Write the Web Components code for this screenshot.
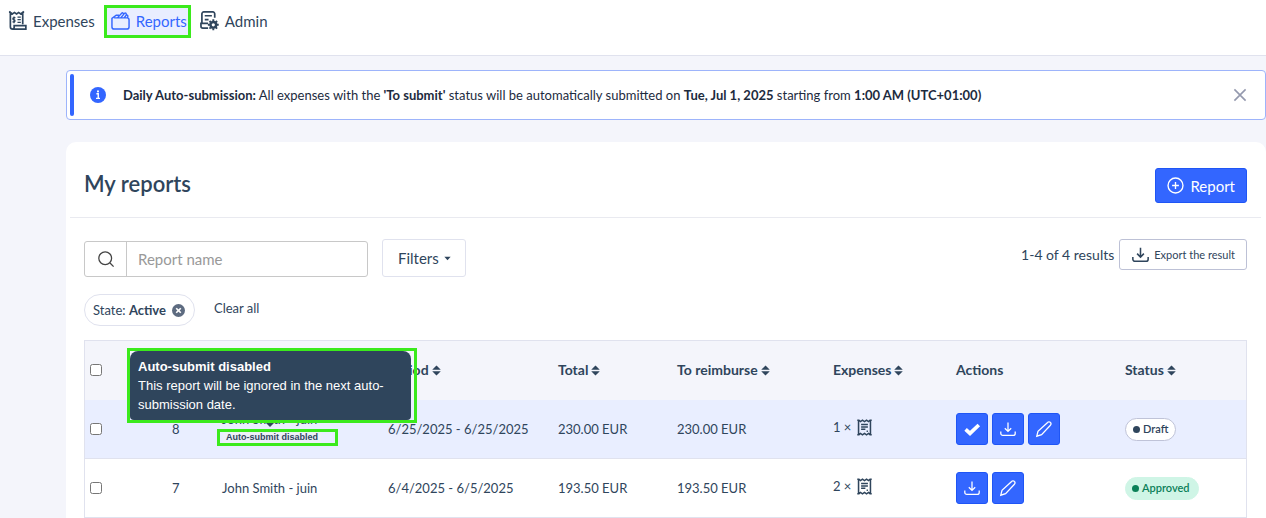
<!DOCTYPE html>
<html lang="en">
<head>
<meta charset="utf-8">
<title>My reports</title>
<style>
  :root {
    --navy: #2f455c;
    --ink: #1d2b3e;
    --blue: #3366ff;
    --page: #f4f5fb;
    --line: #e0e2ee;
    --mark: #3bea1c;
  }
  body { margin: 0; background: var(--page); color: var(--navy); font: 13px/20px Lato, "Liberation Sans", sans-serif; }
</style>
</head>
<body>
<expense-app></expense-app>
<script>
const ICONS = {
  receipt: '<path d="M2.500 16.500V1.500L4.700 3l2.100-1.500L9 3l2.200-1.500L13.300 3l2.200-1.500V14M1 1.200h2M15 1.200h2M2.500 16.500A2.500 2.500 0 0 0 5 19h13.800v-3.500H6.500V17a2 2 0 0 1-2 2"/><path d="M7.800 7H6.200c-1.500 0-1.500 2.200 0 2.200s1.600 2.300 0 2.300H4.700M6.300 5.800v7M10 6.500h3.500M10 9.200h3.500M10 12h3.500" stroke-width="1.300"/>',
  folder: '<path d="M3.300 7.200H16.800A2.200 2.200 0 0 1 19 9.400V16.800A2.200 2.200 0 0 1 16.800 19H3.200A2.200 2.200 0 0 1 1 16.800V7.800L5.500 4.500H8.500M7 7 11.200 2.300Q12 1.600 12.800 2.300L13.300 3.500 10.500 7M13.300 3.500Q14.600 1.300 15.800 2.500L16.300 4 14 7M16.300 4.200Q18.300 4 17.500 7.200"/>',
  admin: '<path d="M15.500 7V3a2 2 0 0 0-2-2H4a2 2 0 0 0-2 2v10M5 5h7.500M5 9h4M8.500 13H1v3a2 2 0 0 0 2 2h5.500"/><circle cx="14" cy="14.500" r="3" stroke-width="2.600"/><path d="M14 8.800v2M14 18.200v2M8.300 14.500h2M17.700 14.500h2M10 10.500l1.300 1.300M16.700 17.200l1.300 1.300M10 18.500l1.300-1.300M16.700 11.800l1.300-1.300" stroke-width="2"/>',
  info: '<circle cx="10" cy="10" r="10" fill="currentColor" stroke="none"/><path d="M8 8.500h2.300V14M7.500 14.200h5" stroke="#fff" stroke-width="1.800"/><circle cx="10" cy="5.500" r="1.300" fill="#fff" stroke="none"/>',
  close: '<path d="m3 3 14 14M17 3 3 17"/>',
  plus: '<circle cx="10" cy="10" r="8.800"/><path d="M10 6v8M6 10h8"/>',
  search: '<circle cx="9" cy="9" r="8"/><path d="m15 15 4.500 4.500"/>',
  download: '<path d="M10 2v11M6 9l4 4 4-4M1 13v2.500a2.500 2.500 0 0 0 2.500 2.500h13a2.500 2.500 0 0 0 2.500-2.500V13"/>',
  pencil: '<path d="m1 19 1.500-6L14.500 1.800a2.300 2.300 0 0 1 3.500 0 2.300 2.300 0 0 1 0 3.500L7 17z"/>',
  check: '<path d="m2 10.500 5.500 5L18.500 5" stroke-width="4.600"/>',
  remove: '<circle cx="10" cy="10" r="10" fill="currentColor" stroke="none"/><path d="m6.500 6.500 7 7M13.500 6.500l-7 7" stroke="#fff" stroke-width="2.600"/>',
  sort: '<path d="M10-1 19.500 8.500H.5zM10 21l9.500-9.500H.5z" fill="currentColor" stroke="none"/>',
  caret: '<path d="M1 5h18l-9 10z" fill="currentColor" stroke="none"/>',
  ticket: '<path d="M3 1v18M17 1v18M1.500 1.500h2L5.300 3l2.300-1.600L10 3l2.400-1.600L14.700 3l1.800-1.500h2M1.500 18.500h2L5.300 17l2.300 1.600L10 17l2.400 1.600 2.300-1.600 1.800 1.500h2M6 6.500h8M6 9.300h8M6 12h5M12.500 14.300H14" stroke-width="1.800"/>'
};

const define = (name, html, setup) => {
  const template = document.createElement('template');
  template.innerHTML = html;
  customElements.define(name, class extends HTMLElement {
    connectedCallback() {
      if (this.shadowRoot) return;
      this.attachShadow({ mode: 'open' }).append(template.content.cloneNode(true));
      if (setup) setup(this, this.shadowRoot);
    }
  });
};

define('ui-icon', `
  <style>
    :host { display: inline-block; flex: none; width: var(--size, 20px); height: var(--size, 20px); }
    svg { display: block; width: 100%; height: 100%; fill: none; stroke: currentColor; stroke-width: var(--stroke, 1.6); overflow: visible; }
  </style>
  <svg viewBox="0 0 20 20" aria-hidden="true"></svg>`,
  (host, root) => { root.querySelector('svg').innerHTML = ICONS[host.getAttribute('name')]; });

define('nav-item', `
  <style>
    :host { display: block; }
    a { display: flex; align-items: center; gap: 6px; box-sizing: border-box; height: 33px; padding: 0 3px 2px; border: 3px solid transparent; color: inherit; text-decoration: none; font-size: 15px; white-space: nowrap; }
    :host([active]) a { background: #e9eeff; border-color: var(--mark); color: var(--blue); padding: 0 1px 2px 4px; }
  </style>
  <a href="#"><slot name="icon"></slot><slot></slot></a>`);

define('app-header', `
  <style>
    :host { display: block; background: #fff; border-bottom: 1px solid var(--line); }
    nav { display: flex; gap: 3px; padding: 5px 2px 17px; }
    .folder { --size: 19px; --stroke: 1.5; }
    .nav { --size: 19px; --stroke: 1.8; }
  </style>
  <nav aria-label="Main">
    <nav-item><ui-icon slot="icon" class="nav" name="receipt"></ui-icon>Expenses</nav-item>
    <nav-item active><ui-icon slot="icon" class="folder" name="folder"></ui-icon>Reports</nav-item>
    <nav-item><ui-icon slot="icon" class="nav" name="admin"></ui-icon>Admin</nav-item>
  </nav>`);

define('info-banner', `
  <style>
    :host { display: flex; align-items: center; box-sizing: border-box; min-height: 50px; padding: 3px; background: #fff; border: 1px solid #9db4fb; border-radius: 4px; color: var(--ink); font-size: 13px; }
    .bar { align-self: stretch; width: 4px; border-radius: 2px; background: var(--blue); margin-right: 16px; }
    ui-icon { --size: 16px; color: var(--blue); }
    p { flex: 1; margin: 0 0 0 17px; }
    button { display: flex; padding: 0; margin-right: 14px; border: 0; background: none; }
    button ui-icon { --stroke: 2; color: #9499ae; }
  </style>
  <span class="bar"></span><ui-icon name="info"></ui-icon>
  <p><slot></slot></p>
  <button aria-label="Dismiss"><ui-icon name="close"></ui-icon></button>`);

define('ui-button', `
  <style>
    :host { display: block; }
    button { display: flex; align-items: center; justify-content: center; gap: 6px; box-sizing: border-box; height: 35px; padding: 0 11px; border: 1px solid #1f55f5; border-radius: 3px; background: var(--blue); color: #fff; font: inherit; font-size: 15px; white-space: nowrap; }
    :host([kind=filter]) button { height: 38px; padding: 0 14px 0 15px; gap: 5px; background: #fff; border-color: var(--line); color: var(--navy); }
    :host([kind=export]) button { height: 31px; gap: 5px; padding: 0 11px 0 12px; background: #fff; border-color: #bdc1d6; color: var(--navy); font-size: 11px; }
    :host([kind=action]) button { width: 32px; height: 32px; padding: 0; }
    :host([kind=plain]) button { height: 20px; padding: 0; border: 0; background: none; color: inherit; font-size: 13px; }
  </style>
  <button><slot></slot></button>`,
  (host, root) => {
    const label = host.getAttribute('label');
    if (label) root.querySelector('button').setAttribute('aria-label', label);
  });

define('search-box', `
  <style>
    :host { display: flex; box-sizing: border-box; width: 284px; height: 36px; border: 1px solid #c8c8c8; border-radius: 3px; background: #fff; }
    label { display: flex; align-items: center; justify-content: center; width: 41px; border-right: 1px solid #c8c8c8; color: #444; }
    ui-icon { --size: 16px; --stroke: 1.6; }
    input { flex: 1; min-width: 0; padding: 0 11px; border: 0; background: none; font: inherit; font-size: 15px; color: var(--navy); }
    input::placeholder { color: #999; }
  </style>
  <label for="q" aria-label="Report name"><ui-icon name="search"></ui-icon></label>
  <input id="q" type="text" placeholder="Report name">`);

define('filter-chip', `
  <style>
    :host { display: flex; align-items: center; box-sizing: border-box; height: 32px; padding: 0 9px 0 8px; gap: 6px; border: 1px solid var(--line); border-radius: 16px; }
    button { display: flex; padding: 0; border: 0; background: none; color: #5d6b80; }
    ui-icon { --size: 13px; }
  </style>
  <span><slot></slot></span><button aria-label="Remove filter"><ui-icon name="remove"></ui-icon></button>`);

define('status-pill', `
  <style>
    :host { display: inline-flex; align-items: center; gap: 3px; box-sizing: border-box; height: 23px; padding: 0 7px; border: 1px solid #bfc3d8; border-radius: 12px; background: #fff; color: var(--navy); font-size: 11px; font-weight: 600; vertical-align: middle; }
    :host::before { content: ""; width: 7px; height: 7px; border-radius: 50%; background: currentColor; }
    :host([state=approved]) { background: #cff5e6; border-color: #cff5e6; color: #0b8058; padding: 0 8px 0 6px; }
  </style>
  <slot></slot>`);

define('auto-submit-name', `
  <style>
    :host { display: block; position: relative; }
    .name { display: block; height: 17px; line-height: 15px; }
    .mark { display: block; box-sizing: border-box; width: 121px; height: 17px; margin: 0 0 0 -5px; border: 3px solid var(--mark); padding-left: 3px; }
    .badge { display: block; width: max-content; padding: 0 3px; background: #edf0f9; font: bold 9px/11px "Liberation Sans", Arial, sans-serif; }
    .tip { position: absolute; z-index: 1; left: -95px; bottom: 23px; box-sizing: border-box; width: 290px; padding-right: 3px; border: 3px solid var(--mark); font: 13px/19px "Liberation Sans", Arial, sans-serif; color: #fff; white-space: normal; }
    .tip div { padding: 6px 8px; border-radius: 8px 8px 4px 4px; background: var(--navy); }
    .tip::after { content: ""; position: absolute; left: 136px; top: 100%; margin-top: 3px; border: 4px solid transparent; border-top-color: var(--navy); border-bottom: 0; }
  </style>
  <span class="name"><slot></slot></span>
  <span class="mark"><span class="badge">Auto-submit disabled</span></span>
  <div class="tip" role="tooltip"><div><b>Auto-submit disabled</b><br>This report will be ignored in the next auto-submission date.</div></div>`);

define('reports-table', `
  <style>
    :host { display: block; }
    table { width: 100%; table-layout: fixed; border-collapse: separate; border-spacing: 0; border: 1px solid var(--line); border-bottom: 0; box-sizing: border-box; }
    th, td { box-sizing: border-box; padding: 0 8px; text-align: left; white-space: nowrap; border-bottom: 1px solid var(--line); height: 59px; }
    th { background: var(--page); border-bottom-color: var(--page); font-weight: 700; font-size: 14px; }
    th ui-icon { --size: 9px; margin-left: 3px; }
    .hot td { background: #e9eeff; }
    th:first-child, td:first-child { padding-left: 5px; }
    input { display: block; width: 12px; height: 12px; margin: 0; }
    .count { display: flex; align-items: center; gap: 5px; padding-bottom: 4px; }
    .count ui-icon { --size: 17px; }
    .actions { display: flex; gap: 4px; }
    .actions ui-icon { --size: 16px; }
  </style>
  <table>
    <colgroup><col style="width:79px"><col style="width:50px"><col style="width:166px"><col style="width:170px"><col style="width:119px"><col style="width:156px"><col style="width:123px"><col style="width:169px"><col style="width:129px"></colgroup>
    <thead><tr>
      <th><input type="checkbox" aria-label="Select all reports"></th><th></th><th></th>
      <th>Period<ui-icon name="sort"></ui-icon></th><th>Total<ui-icon name="sort"></ui-icon></th>
      <th>To reimburse<ui-icon name="sort"></ui-icon></th><th>Expenses<ui-icon name="sort"></ui-icon></th>
      <th>Actions</th><th>Status<ui-icon name="sort"></ui-icon></th>
    </tr></thead>
    <tbody>
      <tr class="hot">
        <td><input type="checkbox" aria-label="Select report 8"></td><td>8</td>
        <td><auto-submit-name>John Smith - juin</auto-submit-name></td>
        <td>6/25/2025 - 6/25/2025</td><td>230.00 EUR</td><td>230.00 EUR</td>
        <td><div class="count">1 × <ui-icon name="ticket"></ui-icon></div></td>
        <td><div class="actions"><ui-button kind="action" label="Submit"><ui-icon name="check"></ui-icon></ui-button><ui-button kind="action" label="Download"><ui-icon name="download"></ui-icon></ui-button><ui-button kind="action" label="Edit"><ui-icon name="pencil"></ui-icon></ui-button></div></td>
        <td><status-pill>Draft</status-pill></td>
      </tr>
      <tr>
        <td><input type="checkbox" aria-label="Select report 7"></td><td>7</td>
        <td>John Smith - juin</td>
        <td>6/4/2025 - 6/5/2025</td><td>193.50 EUR</td><td>193.50 EUR</td>
        <td><div class="count">2 × <ui-icon name="ticket"></ui-icon></div></td>
        <td><div class="actions"><ui-button kind="action" label="Download"><ui-icon name="download"></ui-icon></ui-button><ui-button kind="action" label="Edit"><ui-icon name="pencil"></ui-icon></ui-button></div></td>
        <td><status-pill state="approved">Approved</status-pill></td>
      </tr>
    </tbody>
  </table>`);

define('reports-card', `
  <style>
    :host { display: block; background: #fff; border-radius: 10px 10px 0 0; }
    header { display: flex; align-items: center; justify-content: space-between; margin: 0 5px 0 4px; padding: 26px 14px 14px 14px; border-bottom: 1px solid #e9eaf0; }
    h1 { margin: 0 0 4px; font-size: 22px; line-height: 28px; font-weight: 600; }
    .body { padding: 21px 19px 0 18px; }
    .tools { display: flex; align-items: flex-start; }
    search-box { margin: 2px 14px 0 0; }
    .results { margin: 6px 5px 0 auto; font-size: 14px; }
    .chips { display: flex; align-items: flex-start; gap: 19px; margin: 17px 0 14px; }
    .clear { margin-top: 4px; }
    .plus { --size: 17px; --stroke: 1.6; }
    .caret { --size: 7px; }
    .export { --size: 17px; --stroke: 1.8; }
  </style>
  <header><h1>My reports</h1><ui-button><ui-icon class="plus" name="plus"></ui-icon>Report</ui-button></header>
  <div class="body">
    <div class="tools">
      <search-box></search-box>
      <ui-button kind="filter">Filters<ui-icon class="caret" name="caret"></ui-icon></ui-button>
      <span class="results">1-4 of 4 results</span>
      <ui-button kind="export"><ui-icon class="export" name="download"></ui-icon>Export the result</ui-button>
    </div>
    <div class="chips"><filter-chip>State:&nbsp;<b>Active</b></filter-chip><ui-button class="clear" kind="plain">Clear all</ui-button></div>
    <reports-table></reports-table>
  </div>`);

define('expense-app', `
  <style>
    :host { display: block; }
    main { display: flex; flex-direction: column; gap: 22px; padding: 14px 0 0 66px; }
  </style>
  <app-header></app-header>
  <main>
    <info-banner><b>Daily Auto-submission:</b> All expenses with the <b>'To submit'</b> status will be automatically submitted on <b>Tue, Jul 1, 2025</b> starting from <b>1:00 AM (UTC+01:00)</b></info-banner>
    <reports-card></reports-card>
  </main>`);
</script>
</body>
</html>
